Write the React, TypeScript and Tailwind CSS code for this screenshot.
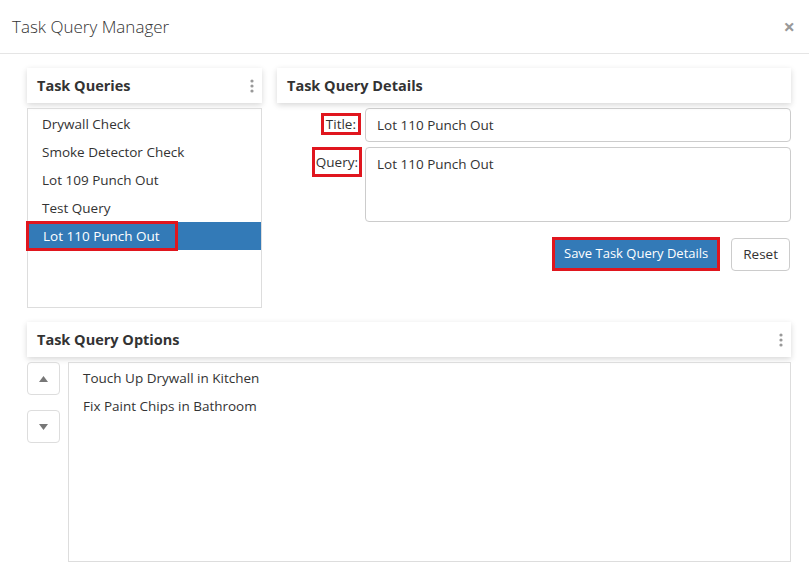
import React from "react";

const font = { fontFamily: '"Open Sans", "Noto Sans", sans-serif' };

function Kebab() {
  return (
    <svg width="4" height="14" viewBox="0 0 4 14" className="fill-[#999]">
      <circle cx="2" cy="2" r="1.6" />
      <circle cx="2" cy="7" r="1.6" />
      <circle cx="2" cy="12" r="1.6" />
    </svg>
  );
}

function PanelHeader({ title, kebab }: { title: string; kebab?: boolean }) {
  return (
    <div className="h-[35px] bg-white shadow-[0_2px_6px_rgba(0,0,0,0.16)] flex items-center justify-between pl-[10px] pr-[8px]">
      <span className="text-[14.5px] font-bold text-[#333]">{title}</span>
      {kebab && <Kebab />}
    </div>
  );
}

const queries = ["Drywall Check", "Smoke Detector Check", "Lot 109 Punch Out", "Test Query", "Lot 110 Punch Out"];

export default function App() {
  return (
    <div className="w-[809px] h-[569px] bg-white text-[#333] overflow-hidden" style={font}>
      <div className="h-[54px] border-b border-[#e5e5e5] flex items-center justify-between pl-[12px] pr-[14px]">
        <span className="text-[17px] text-[#333] font-light">Task Query Manager</span>
        <span className="text-[#999] text-[20px] font-bold leading-none">×</span>
      </div>
      <div className="pl-[27px] pr-[18px] pt-[14px]">
        <div className="flex gap-[15px] h-[240px]">
          <div className="w-[235px] flex flex-col">
            <PanelHeader title="Task Queries" kebab />
            <div className="mt-[5px] h-[200px] border border-[#ddd] pt-[1px]">
              {queries.map((q, i) => {
                const sel = i === queries.length - 1;
                return (
                  <div key={q} className={`h-[28px] flex items-center text-[13.5px] ${sel ? "bg-[#337ab7] text-white" : ""}`}>
                    {sel ? (
                      <span className="h-[30px] -ml-[2px] pl-[14px] pr-[15px] flex items-center border-[3px] border-[#e0161e]">{q}</span>
                    ) : (
                      <span className="pl-[14px]">{q}</span>
                    )}
                  </div>
                );
              })}
            </div>
          </div>
          <div className="flex-1 flex flex-col">
            <PanelHeader title="Task Query Details" />
            <div className="mt-[5px] flex items-start">
              <div className="w-[88px] flex justify-end pr-[4px] pt-[5px]">
                <span className="border-[3px] border-[#e0161e] px-[2px] text-[13.5px] leading-[16px]">Title:</span>
              </div>
              <div className="flex-1 h-[34px] border border-[#ccc] rounded-[4px] flex items-center px-[11px] text-[13.5px]">
                Lot 110 Punch Out
              </div>
            </div>
            <div className="mt-[5px] flex items-start">
              <div className="w-[88px] flex justify-end pr-[3px] pt-0">
                <span className="border-[3px] border-[#e0161e] px-[1px] text-[13.5px] leading-[24px]">Query:</span>
              </div>
              <div className="flex-1 h-[75px] border border-[#ccc] rounded-[4px] px-[11px] pt-[6px] text-[13.5px]">
                Lot 110 Punch Out
              </div>
            </div>
            <div className="mt-[15px] flex justify-end items-center gap-[11px]">
              <div className="border-[3px] border-[#e0161e]">
                <div className="h-[28px] px-[9px] bg-[#337ab7] text-white text-[13px] flex items-center">
                  Save Task Query Details
                </div>
              </div>
              <div className="h-[33px] px-[11px] border border-[#ccc] rounded-[4px] text-[13.5px] flex items-center mr-[1px]">
                Reset
              </div>
            </div>
          </div>
        </div>
        <div className="mt-[14px]">
          <PanelHeader title="Task Query Options" kebab />
          <div className="mt-[5px] flex gap-[8px]">
            <div className="flex flex-col gap-[15px]">
              <div className="w-[33px] h-[33px] border border-[#ddd] rounded-[4px] flex items-center justify-center">
                <svg width="9" height="6" viewBox="0 0 9 6"><path d="M0 6 L4.5 0 L9 6 Z" fill="#777" /></svg>
              </div>
              <div className="w-[33px] h-[33px] border border-[#ddd] rounded-[4px] flex items-center justify-center">
                <svg width="9" height="6" viewBox="0 0 9 6"><path d="M0 0 L9 0 L4.5 6 Z" fill="#777" /></svg>
              </div>
            </div>
            <div className="flex-1 h-[200px] border border-[#ddd] pt-[1px]">
              <div className="h-[28px] flex items-center pl-[14px] text-[13.5px]">Touch Up Drywall in Kitchen</div>
              <div className="h-[28px] flex items-center pl-[14px] text-[13.5px]">Fix Paint Chips in Bathroom</div>
            </div>
          </div>
        </div>
      </div>
    </div>
  );
}
